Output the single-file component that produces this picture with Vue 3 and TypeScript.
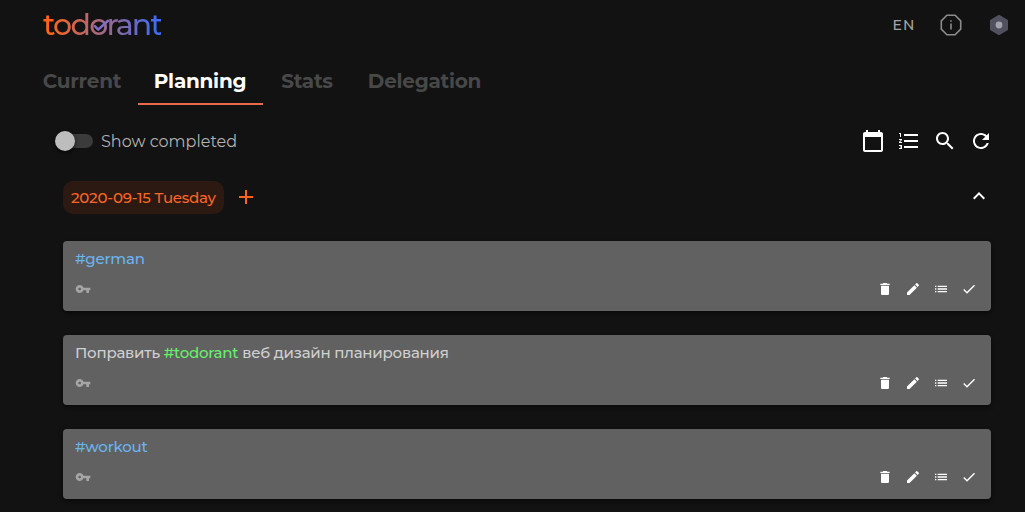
<template>
  <div class="app">
    <header class="header">
      <div class="logo">
        <span class="logo-text">todorant</span>
        <svg class="logo-check" viewBox="0 0 18 16">
          <path d="M2.8 9.2l3.4 3.4L16 3.8" />
        </svg>
      </div>
      <div class="header-actions">
        <button class="lang">EN</button>
        <button class="header-button">
          <svg class="info" viewBox="0 0 24 24">
            <path d="M7.9 2.3h8.2l5.6 5.6v8.2l-5.6 5.6H7.9l-5.6-5.6V7.9z" />
            <path d="M12 10.4v6.2" />
            <path d="M12 7.2v1.6" />
          </svg>
        </button>
        <button class="header-button">
          <svg class="hexagon" viewBox="0 0 24 24">
            <path d="M12 2.9l8 4.6v9l-8 4.6-8-4.6v-9z" />
            <circle cx="12" cy="12" r="3.4" />
          </svg>
        </button>
      </div>
    </header>

    <nav class="tabs">
      <button
        v-for="tab in tabs"
        :key="tab"
        :class="['tab', { active: tab === activeTab }]"
        @click="activeTab = tab"
      >
        <span>{{ tab }}</span>
      </button>
    </nav>

    <div class="toolbar">
      <label class="switch">
        <input v-model="showCompleted" type="checkbox">
        <span class="track"><span class="thumb"></span></span>
        <span class="switch-label">Show completed</span>
      </label>
      <div class="toolbar-actions">
        <button v-for="name in toolbarIcons" :key="name" class="icon-button">
          <svg viewBox="0 0 24 24"><path :d="icons[name]" /></svg>
        </button>
      </div>
    </div>

    <section class="day">
      <div class="day-header">
        <span class="day-title">2020-09-15 Tuesday</span>
        <button class="add"><svg viewBox="0 0 24 24"><path :d="icons.plus" /></svg></button>
        <button class="collapse" @click="collapsed = !collapsed">
          <svg viewBox="0 0 24 24"><path :d="icons.chevron" /></svg>
        </button>
      </div>
      <template v-if="!collapsed">
        <article v-for="todo in todos" :key="todo.id" class="card">
          <p class="card-text">
            <span v-for="(part, i) in todo.parts" :key="i" :class="part.kind">{{ part.text }}</span>
          </p>
          <div class="card-footer">
            <svg class="key" viewBox="0 0 24 24"><path :d="icons.key" /></svg>
            <div class="card-actions">
              <button v-for="name in cardIcons" :key="name">
                <svg viewBox="0 0 24 24"><path :d="icons[name]" /></svg>
              </button>
            </div>
          </div>
        </article>
      </template>
    </section>
  </div>
</template>

<script setup lang="ts">
import { ref } from 'vue'

interface TodoPart {
  text: string
  kind: string
}

interface Todo {
  id: number
  parts: TodoPart[]
}

const icons = {
  calendar: 'M20 3h-1V1h-2v2H7V1H5v2H4c-1.1 0-2 .9-2 2v16c0 1.1.9 2 2 2h16c1.1 0 2-.9 2-2V5c0-1.1-.9-2-2-2zm0 18H4V8h16v13z',
  numbered: 'M2 17h2v.5H3v1h1v.5H2v1h3v-4H2v1zm1-9h1V4H2v1h1v3zm-1 3h1.8L2 13.1v.9h3v-1H3.2L5 10.9V10H2v1zm5-6v2h14V5H7zm0 14h14v-2H7v2zm0-6h14v-2H7v2z',
  search: 'M15.5 14h-.79l-.28-.27C15.41 12.59 16 11.11 16 9.5 16 5.91 13.09 3 9.5 3S3 5.91 3 9.5 5.91 16 9.5 16c1.61 0 3.09-.59 4.23-1.57l.27.28v.79l5 4.99L20.49 19l-4.99-5zm-6 0C7.01 14 5 11.99 5 9.5S7.01 5 9.5 5 14 7.01 14 9.5 11.99 14 9.5 14z',
  refresh: 'M17.65 6.35C16.2 4.9 14.21 4 12 4c-4.42 0-7.99 3.58-7.99 8s3.57 8 7.99 8c3.73 0 6.84-2.55 7.73-6h-2.08c-.82 2.33-3.04 4-5.65 4-3.31 0-6-2.69-6-6s2.69-6 6-6c1.66 0 3.14.69 4.22 1.78L13 11h7V4l-2.35 2.35z',
  plus: 'M19 13h-6v6h-2v-6H5v-2h6V5h2v6h6v2z',
  chevron: 'M12 8l-6 6 1.41 1.41L12 10.83l4.59 4.58L18 14z',
  key: 'M12.65 10C11.83 7.67 9.61 6 7 6c-3.31 0-6 2.69-6 6s2.69 6 6 6c2.61 0 4.83-1.67 5.65-4H17v4h4v-4h2v-4H12.65zM7 14c-1.1 0-2-.9-2-2s.9-2 2-2 2 .9 2 2-.9 2-2 2z',
  remove: 'M6 19c0 1.1.9 2 2 2h8c1.1 0 2-.9 2-2V7H6v12zM19 4h-3.5l-1-1h-5l-1 1H5v2h14V4z',
  edit: 'M3 17.25V21h3.75L17.81 9.94l-3.75-3.75L3 17.25zM20.71 7.04c.39-.39.39-1.02 0-1.41l-2.34-2.34c-.39-.39-1.02-.39-1.41 0l-1.83 1.83 3.75 3.75 1.83-1.83z',
  list: 'M3 13h2v-2H3v2zm0 4h2v-2H3v2zm0-8h2V7H3v2zm4 4h14v-2H7v2zm0 4h14v-2H7v2zM7 7v2h14V7H7z',
  done: 'M9 16.2L4.8 12l-1.4 1.4L9 19 21 7l-1.4-1.4L9 16.2z'
}

type IconName = keyof typeof icons

const tabs = ['Current', 'Planning', 'Stats', 'Delegation']
const toolbarIcons: IconName[] = ['calendar', 'numbered', 'search', 'refresh']
const cardIcons: IconName[] = ['remove', 'edit', 'list', 'done']

const activeTab = ref('Planning')
const showCompleted = ref(false)
const collapsed = ref(false)

const todos = ref<Todo[]>([
  { id: 1, parts: [{ text: '#german', kind: 'blue' }] },
  {
    id: 2,
    parts: [
      { text: 'Поправить ', kind: 'plain' },
      { text: '#todorant', kind: 'green' },
      { text: ' веб дизайн планирования', kind: 'plain' }
    ]
  },
  { id: 3, parts: [{ text: '#workout', kind: 'blue' }] }
])
</script>

<style>
body {
  margin: 0;
  background: #121212;
  overflow: hidden;
}
</style>

<style scoped>
.app {
  box-sizing: border-box;
  height: 512px;
  overflow: hidden;
  background: #121212;
  color: #fff;
  font-family: Montserrat, Inter, "Noto Sans", sans-serif;
}

button {
  display: flex;
  align-items: center;
  justify-content: center;
  padding: 0;
  border: 0;
  background: none;
  color: inherit;
  font: inherit;
}

svg {
  display: block;
  fill: currentColor;
}

/* header */
.header {
  display: flex;
  align-items: center;
  justify-content: space-between;
  height: 50px;
  padding: 0 2px 0 43px;
}

.logo {
  position: relative;
}

.logo-text {
  display: block;
  background: linear-gradient(90deg, #ff641a 5%, #3f6cf5 97%);
  background-clip: text;
  -webkit-background-clip: text;
  color: transparent;
  font-size: 30px;
  font-weight: 500;
  letter-spacing: -1.75px;
  line-height: 40px;
}

.logo-check {
  position: absolute;
  left: 49px;
  top: 12px;
  width: 18px;
  height: 16px;
  fill: none;
  stroke: #806cc4;
  stroke-width: 2.6;
  stroke-linecap: round;
  stroke-linejoin: round;
}

.header-actions {
  display: flex;
  align-items: center;
}

.lang {
  width: 46px;
  color: #a5a5a5;
  font-size: 14px;
  font-weight: 500;
  letter-spacing: 1.25px;
}

.header-button {
  width: 48px;
  height: 48px;
  color: #8c8c8c;
}

.header-button svg {
  width: 24px;
  height: 24px;
}

.info {
  fill: none;
  stroke: currentColor;
  stroke-width: 1.6;
}

.hexagon path {
  fill: #50505f;
  stroke: #50505f;
  stroke-width: 2;
  stroke-linejoin: round;
}

.hexagon circle {
  fill: #a3a3ab;
}

/* tabs */
.tabs {
  display: grid;
  grid-template-columns: 111px 125px 89px 146px;
  height: 48px;
  margin: 7px 0 0 27px;
}

.tab {
  box-sizing: border-box;
  padding: 2px 1px 0 0;
  border-bottom: 2px solid transparent;
  color: #484848;
  font-size: 20px;
  font-weight: 700;
  letter-spacing: -0.25px;
}

.tab.active {
  border-bottom-color: #e9694a;
  color: #fff;
}

/* toolbar */
.toolbar {
  display: flex;
  align-items: center;
  justify-content: space-between;
  height: 36px;
  margin: 18px 26px 0 55px;
}

.switch {
  display: flex;
  align-items: center;
}

.switch input {
  display: none;
}

.track {
  display: flex;
  align-items: center;
  width: 36px;
  height: 14px;
  margin-left: 2px;
  border-radius: 7px;
  background: #3b3b3b;
}

.thumb {
  width: 20px;
  height: 20px;
  margin-left: -2px;
  border-radius: 50%;
  background: #bdbdbd;
  box-shadow: 0 2px 4px rgba(0, 0, 0, 0.6);
}

.switch-label {
  margin-left: 8px;
  color: #b2b2b2;
  font-size: 16px;
}

.toolbar-actions {
  display: flex;
}

.icon-button {
  width: 36px;
  height: 36px;
}

.icon-button svg {
  width: 24px;
  height: 24px;
}

/* day */
.day {
  margin: 22px 34px 0 63px;
}

.day-header {
  display: flex;
  align-items: center;
  height: 33px;
  margin-bottom: 27px;
}

.day-title {
  box-sizing: border-box;
  width: 161px;
  height: 33px;
  padding-left: 8px;
  border-radius: 10px;
  background: #2c1a12;
  color: #fa6528;
  font-size: 15px;
  font-weight: 500;
  letter-spacing: -0.24px;
  line-height: 33px;
  white-space: nowrap;
}

.add {
  margin: 0 0 1px 10px;
  color: #ff641a;
}

.add svg,
.collapse svg {
  width: 24px;
  height: 24px;
}

.collapse {
  margin: 0 0 3px auto;
}

.card {
  box-sizing: border-box;
  height: 70px;
  margin-bottom: 24px;
  padding: 8px 12px;
  border-radius: 4px;
  background: #616161;
  box-shadow: 0 2px 4px rgba(0, 0, 0, 0.5);
}

.card-text {
  margin: 0;
  color: #d0d0d0;
  font-size: 15px;
  font-weight: 500;
  letter-spacing: -0.22px;
  line-height: 20px;
  white-space: pre;
}

.blue {
  color: #6cb4f0;
}

.green {
  color: #69f06e;
}

.card-footer {
  display: flex;
  align-items: center;
  justify-content: space-between;
  height: 16px;
  margin-top: 12px;
}

.key {
  width: 16px;
  height: 16px;
  color: #a5a5a5;
}

.card-actions {
  display: flex;
  gap: 12px;
  margin-right: 2px;
}

.card-actions svg {
  width: 16px;
  height: 16px;
}
</style>
